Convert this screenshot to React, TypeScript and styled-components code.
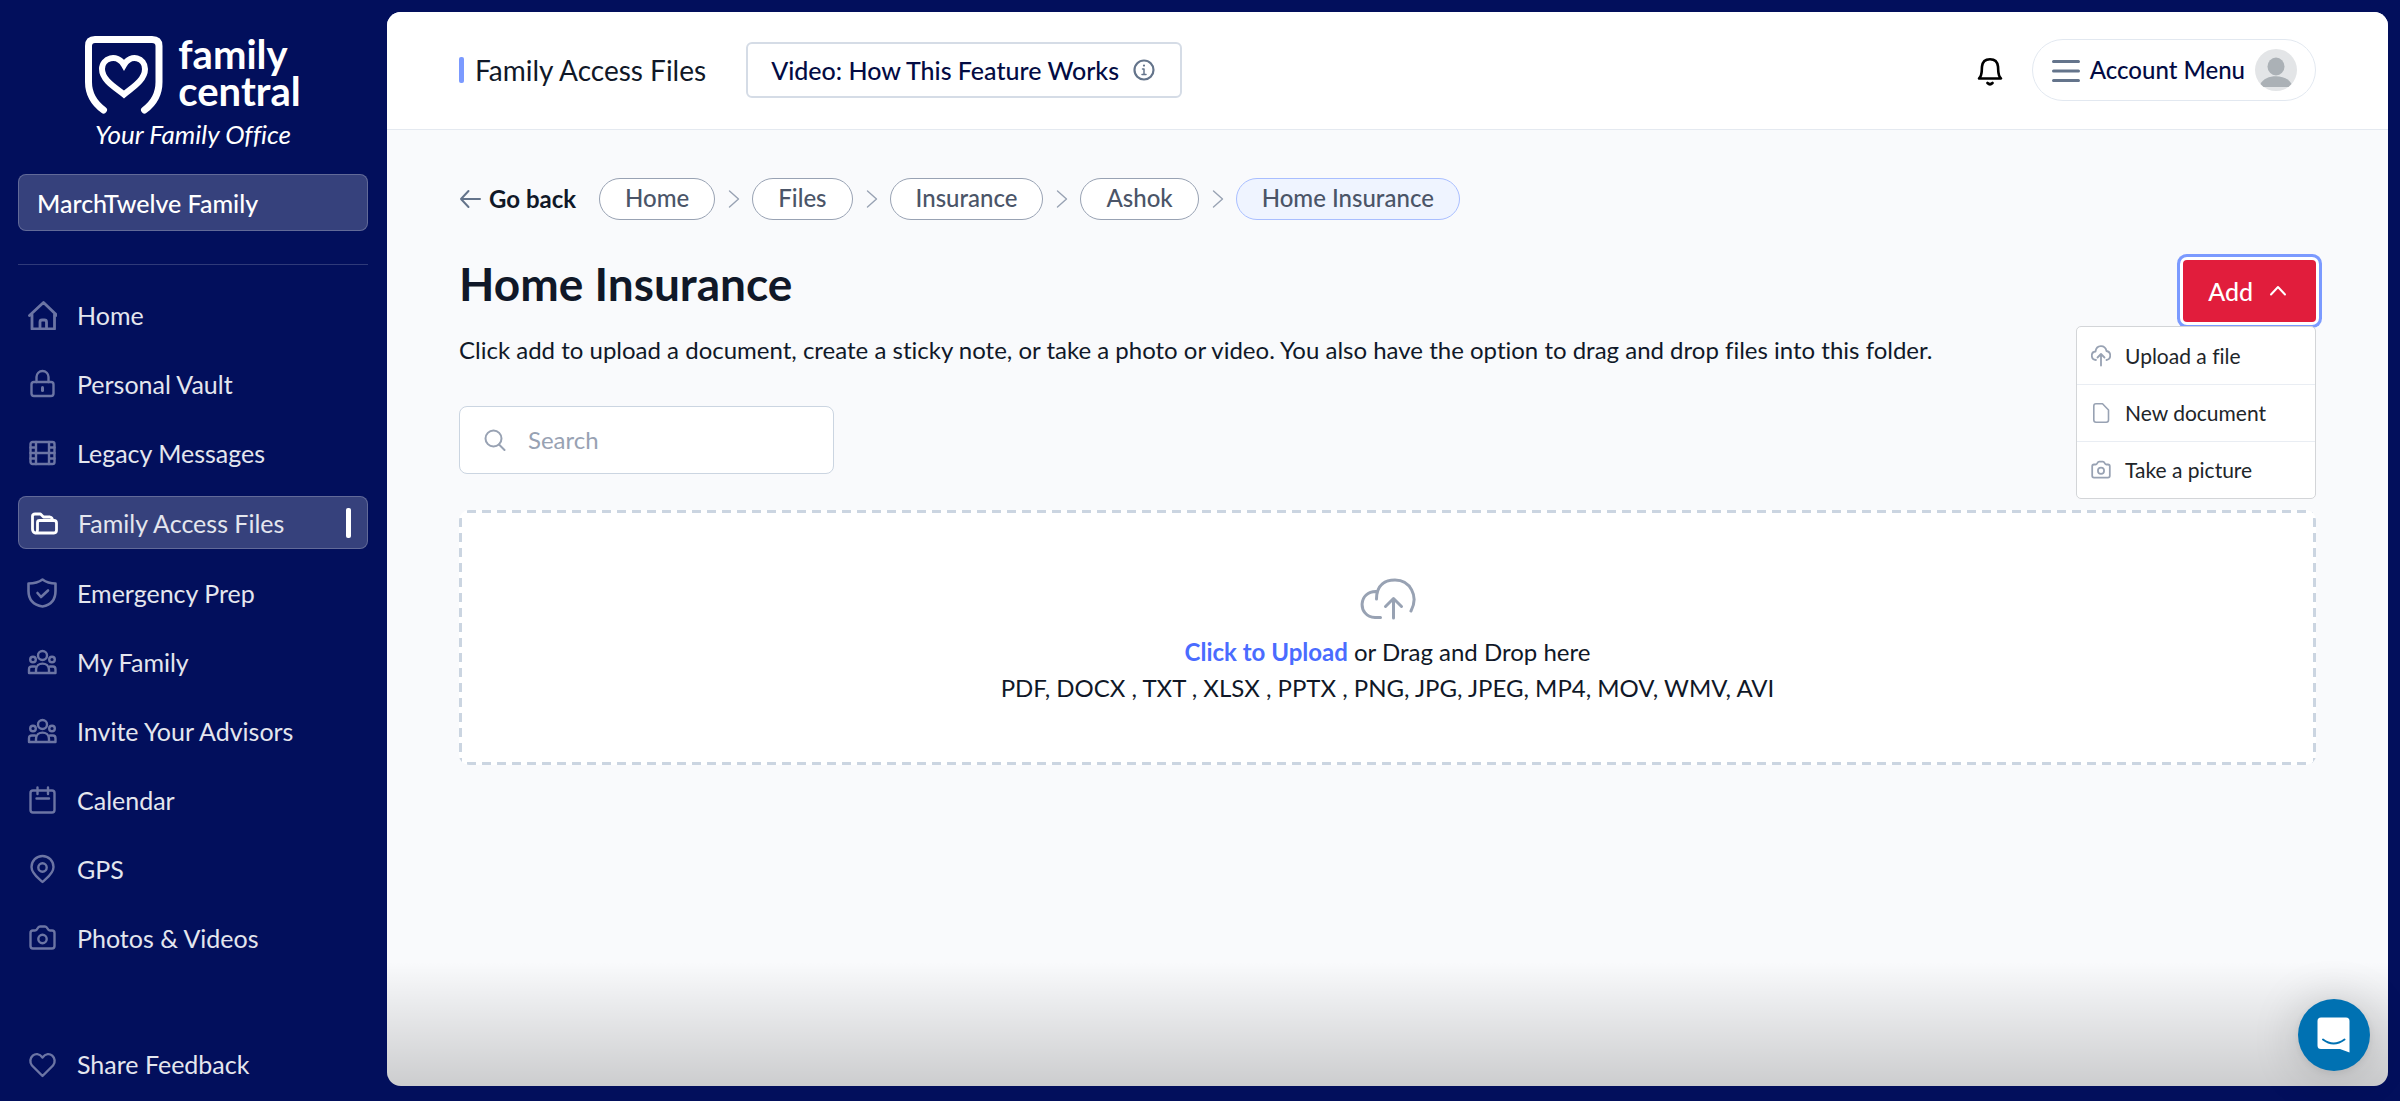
import React from "react";
import styled, { createGlobalStyle, css } from "styled-components";

const navy = "#020f5c";
const ink = "#101828";
const slate = "#4b5568";
const muted = "#98a2b3";
const line = "#cbd5e1";
const canvas = "#f9fafc";

const GlobalStyle = createGlobalStyle`
  *, *::before, *::after { box-sizing: border-box; }
  html, body, #root { height: 100%; }
  body {
    margin: 0;
    background: ${navy};
    color: ${ink};
    font-family: Lato, "Liberation Sans", sans-serif;
    font-size: 24px;
    font-variant-ligatures: none;
    line-height: 36px;
  }
  button, input { font: inherit; font-variant-ligatures: none; color: inherit; }
  button { cursor: pointer; }
  a { color: inherit; text-decoration: none; }
  h1, h2, p, ul, ol { margin: 0; padding: 0; }
  ul, ol { list-style: none; }
  svg { display: block; flex: none; }
`;

/* ---------- shell ---------- */

const Shell = styled.div`
  display: grid;
  grid-template-columns: 387px minmax(0, 1fr);
  min-height: 100vh;
`;

const Sidebar = styled.aside`
  display: flex;
  flex-direction: column;
  padding: 36px 19px 12px 18px;
`;

const Panel = styled.div`
  position: relative;
  display: flex;
  flex-direction: column;
  margin: 12px 12px 15px 0;
  border-radius: 14px;
  background: ${canvas};
  overflow: hidden;
`;

const BottomFade = styled.div`
  position: absolute;
  inset: auto 0 0 0;
  height: 124px;
  background: linear-gradient(to bottom, rgba(0, 0, 0, 0), rgba(0, 0, 0, 0.18));
  pointer-events: none;
`;

/* ---------- sidebar ---------- */

const Brand = styled.a`
  display: flex;
  flex-direction: column;
  align-items: center;
  color: #fff;
`;

const BrandMark = styled.span`
  display: flex;
  gap: 15px;
`;

const BrandName = styled.span`
  font-size: 40px;
  font-weight: 700;
  line-height: 37px;
`;

const Tagline = styled.span`
  margin-top: 4px;
  font-size: 26px;
  font-style: italic;
  line-height: 32px;
`;

const boxed = css`
  border: 1px solid rgba(255, 255, 255, 0.22);
  background: #36417c;
`;

const FamilyButton = styled.button`
  margin-top: 24px;
  padding: 0 18px;
  height: 57px;
  border-radius: 8px;
  ${boxed}
  color: #fff;
  font-size: 25px;
  font-weight: 500;
  text-align: left;
`;

const Divider = styled.hr`
  width: 100%;
  margin: 33px 0 24px;
  border: 0;
  border-top: 1px solid rgba(255, 255, 255, 0.18);
`;

const Nav = styled.nav`
  display: flex;
  flex: 1;
  flex-direction: column;
  justify-content: space-between;
`;

const NavList = styled.ul`
  display: flex;
  flex-direction: column;
  gap: 18px;
`;

const NavLink = styled.a<{ $active?: boolean }>`
  display: flex;
  align-items: center;
  gap: 20px;
  height: ${(p) => (p.$active ? 53 : 51)}px;
  padding: 0 16px 0 9px;
  border-radius: 8px;
  color: #e4e6ee;
  font-size: 25px;
  ${(p) => p.$active && boxed}

  svg { color: ${(p) => (p.$active ? "#fff" : "#6c75a4")}; }
`;

const ActiveBar = styled.span`
  width: 5px;
  height: 30px;
  margin-left: auto;
  border-radius: 2px;
  background: #fff;
`;

/* ---------- header ---------- */

const Header = styled.header`
  display: flex;
  align-items: center;
  justify-content: space-between;
  height: 118px;
  padding: 0 72px 1px;
  border-bottom: 1px solid #e4e9f0;
  background: #fff;
`;

const HeaderGroup = styled.div<{ $gap: number }>`
  display: flex;
  align-items: center;
  gap: ${(p) => p.$gap}px;
`;

const SectionTitle = styled.h2`
  display: flex;
  align-items: center;
  gap: 11px;
  font-size: 28px;
  font-weight: 400;

  &::before {
    content: "";
    width: 5px;
    height: 26px;
    border-radius: 2px;
    background: #7b9aff;
  }
`;

const VideoButton = styled.button`
  display: flex;
  align-items: center;
  gap: 14px;
  height: 56px;
  padding: 0 25px 0 23px;
  border: 2px solid #d5dce6;
  border-radius: 6px;
  background: #fff;
  color: #030b43;
  font-size: 25px;
  font-weight: 500;
  svg { color: #64748b; }
`;

const BellButton = styled.button`
  padding: 0;
  border: 0;
  background: none;
  color: #000;
`;

const AccountButton = styled.button`
  display: flex;
  align-items: center;
  gap: 10px;
  height: 62px;
  padding: 0 18px 0 19px;
  border: 1px solid #e2e8f0;
  border-radius: 31px;
  background: #fff;
  color: #030b43;
  font-weight: 500;
  svg:first-child { color: #64748b; }
`;

/* ---------- content ---------- */

const Content = styled.main`
  flex: 1;
  padding: 48px 72px 124px;
`;

const CrumbRow = styled.nav`
  display: flex;
  align-items: center;
  gap: 23px;
`;

const BackLink = styled.a`
  display: flex;
  align-items: center;
  gap: 7px;
  font-weight: 700;
  svg { color: #64748b; }
`;

const Crumbs = styled.ol`
  display: flex;
  align-items: center;
  gap: 13px;
`;

const CrumbItem = styled.li`
  display: flex;
  align-items: center;
  gap: 12px;
  svg { color: ${muted}; }
`;

const Crumb = styled.a<{ $current?: boolean }>`
  height: 42px;
  padding: 0 25px;
  border: 1px solid ${(p) => (p.$current ? "#a9beff" : muted)};
  border-radius: 21px;
  background: ${(p) => (p.$current ? "#eff4ff" : "#fff")};
  color: ${slate};
  font-weight: 500;
  line-height: 38px;
`;

const TitleRow = styled.div`
  display: flex;
  align-items: flex-start;
  justify-content: space-between;
  gap: 40px;
  margin-top: 40px;
`;

const Title = styled.h1`
  margin-bottom: 24px;
  font-size: 46px;
  font-weight: 700;
  line-height: 48px;
`;

const AddArea = styled.div`
  position: relative;
  flex: none;
`;

const AddButton = styled.button`
  display: flex;
  align-items: center;
  gap: 16px;
  height: 62px;
  padding: 0 29px 0 25px;
  border: 0;
  border-radius: 4px;
  background: #e11d3c;
  box-shadow: 0 0 0 3px #fff, 0 0 0 6px #7b9aff;
  color: #fff;
  font-size: 25px;
  font-weight: 500;
`;

const Menu = styled.ul`
  position: absolute;
  z-index: 1;
  top: 66px;
  right: 0;
  width: 240px;
  border: 1px solid #d3d5d8;
  border-radius: 5px;
  background: #fff;

  li { height: 57px; }
  li + li { border-top: 1px solid #e9edf3; }
`;

const MenuButton = styled.button`
  display: flex;
  align-items: center;
  gap: 14px;
  width: 100%;
  height: 100%;
  padding: 0 14px;
  border: 0;
  background: none;
  color: #212529;
  font-size: 21px;
  svg { color: ${muted}; }
`;

const SearchBox = styled.label`
  display: flex;
  align-items: center;
  gap: 22px;
  width: 375px;
  height: 68px;
  margin-top: 38px;
  padding: 0 24px;
  border: 1px solid ${line};
  border-radius: 8px;
  background: #fff;
  svg { color: ${muted}; }
`;

const SearchInput = styled.input`
  flex: 1;
  min-width: 0;
  padding: 0;
  border: 0;
  outline: 0;
  background: none;
  &::placeholder { color: ${muted}; opacity: 1; }
`;

const dash = (dir: string) =>
  `repeating-linear-gradient(${dir}, ${line} 0 9px, transparent 9px 15px)`;

const DropZone = styled.section`
  display: flex;
  flex-direction: column;
  align-items: center;
  margin-top: 36px;
  padding: 68px 24px 59px;
  border-radius: 10px;
  background:
    ${dash("to right")} 8px 0 / 100% 3px no-repeat,
    ${dash("to right")} 8px 100% / 100% 3px no-repeat,
    ${dash("to bottom")} 0 8px / 3px 100% no-repeat,
    ${dash("to bottom")} 100% 8px / 3px 100% no-repeat,
    #fff;
  text-align: center;
  svg { margin-bottom: 14px; color: ${muted}; }
`;

const UploadButton = styled.button`
  padding: 0;
  border: 0;
  background: none;
  color: #4a6cff;
  font-weight: 700;
`;

const ChatButton = styled.button`
  position: fixed;
  right: 30px;
  bottom: 30px;
  display: grid;
  place-items: center;
  width: 72px;
  height: 72px;
  padding: 0;
  border: 0;
  border-radius: 50%;
  background: #0071b2;
  box-shadow: 0 2px 9px rgba(0, 0, 0, 0.08), 0 3px 48px rgba(0, 0, 0, 0.18);
`;

/* ---------- icons ---------- */

type IconProps = { w?: number; h?: number; sw?: number; box?: string; children: React.ReactNode };

const Icon = ({ w = 30, h = 30, sw = 2.4, box, children }: IconProps) => (
  <svg
    width={w}
    height={h}
    viewBox={box ?? `0 0 ${w} ${h}`}
    fill="none"
    stroke="currentColor"
    strokeWidth={sw}
    strokeLinecap="round"
    strokeLinejoin="round"
    aria-hidden="true"
  >
    {children}
  </svg>
);

const ShieldLogo = () => (
  <Icon w={78} h={78} sw={7}>
    <path d="M18.500 74 C9 67 3.500 58 3.500 46 V10 Q3.500 3.500 10 3.500 H67 Q74 3.500 74 10 V46 C74 58 69 67 59.500 74" />
    <path
      d="M39 58.500 C33 53 17 45 17 33 C17 22 32 17 39 29 C46 17 60 22 60 33 C60 45 45 53 39 58.500 Z"
      strokeWidth={6}
      strokeLinejoin="miter"
    />
  </Icon>
);

const HomeIcon = () => (
  <Icon sw={2.8} box="-1 0 30 30">
    <path d="M1.500 15.500 L15.500 2.500 L29 15.500 M4 14.500 V29 H26.500 V14.500 M12 28.500 V22 Q12 20 14 20 H16.500 Q18.500 20 18.500 22 V28.500" />
  </Icon>
);
const LockIcon = () => (
  <Icon>
    <rect x="4.500" y="13" width="22" height="14" rx="2.500" />
    <path d="M9.500 13 V8 A6 6 0 0 1 21.500 8 V13" />
    <path d="M15.500 18.500 V21.500" strokeWidth={3} />
  </Icon>
);
const FilmIcon = () => (
  <Icon>
    <rect x="3.500" y="4" width="24" height="22" rx="2" />
    <path d="M9 4 V26 M22 4 V26 M9 15 H22 M3.500 9.500 H9 M3.500 15 H9 M3.500 20.500 H9 M22 9.500 H27.500 M22 15 H27.500 M22 20.500 H27.500" />
  </Icon>
);
const FolderIcon = () => (
  <Icon sw={2.8}>
    <path d="M7 25 Q4.500 24 4.500 21 V8 Q4.500 6 7 6 H12.500 L15.500 9 H22 Q24.500 9.500 24.500 12.500" />
    <path d="M9.500 14.500 Q9.500 12.500 11.500 12.500 H26 Q28.500 12.500 28.500 15 V22 Q28.500 25 26 25 H8 Q9.500 24 9.500 22 Z" />
  </Icon>
);
const ShieldIcon = () => (
  <Icon sw={2.6}>
    <path d="M15.500 1.500 C11.500 4.500 7 5.500 1.500 5.500 V13 C1.500 22 7 27 15.500 28.500 C24 27 28.500 22 28.500 13 V5.500 C24 5.500 19.500 4.500 15.500 1.500 Z" />
    <path d="M10.500 15 L14 19 L21 12.500" />
  </Icon>
);
const PeopleIcon = () => (
  <Icon>
    <circle cx="15.500" cy="8.500" r="4.500" />
    <circle cx="6" cy="12.500" r="2.800" />
    <circle cx="25" cy="12.500" r="2.800" />
    <path d="M9 26 V23 C9 14.500 22 14.500 22 23 V26 M2 26 H28.500 V22.500 Q28.500 19.500 26 19.500 H23 M8 19.500 H5 Q2 19.500 2 22.500 V26" />
  </Icon>
);
const CalendarIcon = () => (
  <Icon>
    <rect x="3.500" y="5.500" width="24" height="22" rx="2.500" />
    <path d="M10.500 2.500 V9 M21 2.500 V9 M9.500 13.500 H22" />
  </Icon>
);
const PinIcon = () => (
  <Icon>
    <path d="M15.500 28 C12 24.500 4.500 20 4.500 13 A11 11 0 0 1 26.500 13 C26.500 20 19 24.500 15.500 28 Z" />
    <circle cx="15.500" cy="13.500" r="4.200" />
  </Icon>
);
const cameraShapes = (
  <>
    <path d="M6 7.500 H8 Q9.500 7.500 10.500 5.500 Q11.500 3.500 13 3.500 H18 Q19.500 3.500 20.500 5.500 Q21.500 7.500 23 7.500 H25 Q27.500 7.500 27.500 10 V23 Q27.500 25.500 25 25.500 H6 Q3.500 25.500 3.500 23 V10 Q3.500 7.500 6 7.500 Z" />
    <circle cx="15.500" cy="16" r="4.200" />
  </>
);
const CameraIcon = () => <Icon>{cameraShapes}</Icon>;
const HeartIcon = () => (
  <Icon>
    <path d="M15.500 27 L5 16.500 C-0.500 9.500 9 0 15.500 8.500 C22 0 31.500 9.500 26 16.500 Z" />
  </Icon>
);

const InfoIcon = () => (
  <Icon w={22} h={22} sw={2.2}>
    <circle cx="11" cy="11" r="9.500" />
    <path d="M9.500 10 H11 V15.500 M9 15.500 H13" strokeWidth={1.5} />
    <path d="M11 6.500 V6.600" />
  </Icon>
);
const BellIcon = () => (
  <Icon w={26} h={34} sw={2.6} box="0 -4 26 34">
    <path d="M2 21.500 C5.500 18.500 4.500 14 5 9.500 C5.500 4.500 8.500 2.200 13 2.200 C17.500 2.200 20.500 4.500 21 9.500 C21.500 14 20.500 18.500 24 21.500 Z" />
    <path d="M10.500 26 Q13 28.500 15.500 26" />
  </Icon>
);
const BurgerIcon = () => (
  <Icon w={28} h={24} sw={3}>
    <path d="M1.500 3.500 H26.500 M1.500 13 H26.500 M1.500 22.500 H26.500" />
  </Icon>
);
const Avatar = () => (
  <svg width="42" height="42" viewBox="0 0 42 42" aria-hidden="true">
    <circle cx="21" cy="21" r="21" fill="#e3e5e7" />
    <ellipse cx="21" cy="17.500" rx="8.500" ry="9" fill="#abb1b6" />
    <path d="M5.500 35 C10 24.500 32 24.500 36.500 35 L33.500 38 H8.500 Z" fill="#abb1b6" />
  </svg>
);
const ArrowLeftIcon = () => (
  <Icon w={23} h={22} sw={2}>
    <path d="M21 11 H2 M9.500 3 L2 11 L9.500 19" />
  </Icon>
);
const ChevronIcon = () => (
  <Icon w={12} h={20} sw={1.4}>
    <path d="M1.500 2 L10.500 10 L1.500 18" />
  </Icon>
);
const ChevronUpIcon = () => (
  <Icon w={18} h={12} sw={2}>
    <path d="M2 9.500 L9 2 L16 9.500" />
  </Icon>
);
const UploadIcon = () => (
  <Icon w={20} h={22} sw={1.8}>
    <path d="M5 15 C-0.500 14.500 -0.500 7 4.500 6.500 C5.500 -0.500 14 -0.500 15.500 6 C20.500 7 20.500 14 15.500 15" />
    <path d="M10 20.500 V9.500 M6.500 12.500 L10 9 L13.500 12.500" />
  </Icon>
);
const FileIcon = () => (
  <Icon w={20} h={22} sw={1.6}>
    <path d="M5 1.800 H11.500 L17.500 8 V18 Q17.500 20.200 15.300 20.200 H5 Q2.800 20.200 2.800 18 V4 Q2.800 1.800 5 1.800 Z" />
  </Icon>
);
const SmallCameraIcon = () => (
  <Icon w={20} h={22} box="2 0 27 30">{cameraShapes}</Icon>
);
const SearchIcon = () => (
  <Icon w={22} h={22} sw={2}>
    <circle cx="9.500" cy="9.500" r="8" />
    <path d="M15 15.500 L20.500 21" />
  </Icon>
);
const CloudIcon = () => (
  <Icon w={56} h={42} sw={3}>
    <path d="M20.500 39.500 H15 C-3 38.500 -2 12.500 17 13.500 M16.500 21 C16.500 6 26 2 35 2 C50 2 59 18 51 33" />
    <path d="M33.500 40 V21 M25.500 28.500 L33.500 20.500 L41.500 28.500" />
  </Icon>
);
const ChatIcon = () => (
  <svg width="34" height="36" viewBox="0 0 34 36" aria-hidden="true">
    <path d="M4 0.500 H29 Q32.500 0.500 32.500 4 V35.500 L23 32 H4 Q0.500 32 0.500 28.500 V4 Q0.500 0.500 4 0.500 Z" fill="#fff" />
    <path d="M6 22.500 Q16.500 30.500 27.500 22.500" fill="none" stroke="#0071b2" strokeWidth="2" strokeLinecap="round" />
  </svg>
);

/* ---------- page ---------- */

const navItems = [
  { label: "Home", icon: <HomeIcon /> },
  { label: "Personal Vault", icon: <LockIcon /> },
  { label: "Legacy Messages", icon: <FilmIcon /> },
  { label: "Family Access Files", icon: <FolderIcon />, active: true },
  { label: "Emergency Prep", icon: <ShieldIcon /> },
  { label: "My Family", icon: <PeopleIcon /> },
  { label: "Invite Your Advisors", icon: <PeopleIcon /> },
  { label: "Calendar", icon: <CalendarIcon /> },
  { label: "GPS", icon: <PinIcon /> },
  { label: "Photos & Videos", icon: <CameraIcon /> },
];

const crumbs = ["Home", "Files", "Insurance", "Ashok", "Home Insurance"];

const addActions = [
  { label: "Upload a file", icon: <UploadIcon /> },
  { label: "New document", icon: <FileIcon /> },
  { label: "Take a picture", icon: <SmallCameraIcon /> },
];

export default function App() {
  return (
    <>
      <GlobalStyle />
      <Shell>
        <Sidebar>
          <Brand href="#">
            <BrandMark>
              <ShieldLogo />
              <BrandName>
                family
                <br />
                central
              </BrandName>
            </BrandMark>
            <Tagline>Your Family Office</Tagline>
          </Brand>
          <FamilyButton type="button">MarchTwelve Family</FamilyButton>
          <Divider />
          <Nav aria-label="Main">
            <NavList>
              {navItems.map((item) => (
                <li key={item.label}>
                  <NavLink href="#" $active={item.active} aria-current={item.active ? "page" : undefined}>
                    {item.icon}
                    {item.label}
                    {item.active && <ActiveBar />}
                  </NavLink>
                </li>
              ))}
            </NavList>
            <NavLink href="#">
              <HeartIcon />
              Share Feedback
            </NavLink>
          </Nav>
        </Sidebar>

        <Panel>
          <Header>
            <HeaderGroup $gap={40}>
              <SectionTitle>Family Access Files</SectionTitle>
              <VideoButton type="button">
                Video: How This Feature Works
                <InfoIcon />
              </VideoButton>
            </HeaderGroup>
            <HeaderGroup $gap={29}>
              <BellButton type="button" aria-label="Notifications">
                <BellIcon />
              </BellButton>
              <AccountButton type="button">
                <BurgerIcon />
                Account Menu
                <Avatar />
              </AccountButton>
            </HeaderGroup>
          </Header>

          <Content>
            <CrumbRow aria-label="Breadcrumb">
              <BackLink href="#">
                <ArrowLeftIcon />
                Go back
              </BackLink>
              <Crumbs>
                {crumbs.map((name, i) => (
                  <CrumbItem key={name}>
                    {i > 0 && <ChevronIcon />}
                    <Crumb href="#" $current={i === crumbs.length - 1}>
                      {name}
                    </Crumb>
                  </CrumbItem>
                ))}
              </Crumbs>
            </CrumbRow>

            <TitleRow>
              <div>
                <Title>Home Insurance</Title>
                <p>
                  Click add to upload a document, create a sticky note, or take a photo or video. You also have the
                  option to drag and drop files into this folder.
                </p>
              </div>
              <AddArea>
                <AddButton type="button" aria-expanded="true">
                  Add
                  <ChevronUpIcon />
                </AddButton>
                <Menu>
                  {addActions.map((action) => (
                    <li key={action.label}>
                      <MenuButton type="button">
                        {action.icon}
                        {action.label}
                      </MenuButton>
                    </li>
                  ))}
                </Menu>
              </AddArea>
            </TitleRow>

            <SearchBox>
              <SearchIcon />
              <SearchInput type="search" placeholder="Search" aria-label="Search" />
            </SearchBox>

            <DropZone>
              <CloudIcon />
              <p>
                <UploadButton type="button">Click to Upload</UploadButton> or Drag and Drop here
              </p>
              <p>PDF, DOCX , TXT , XLSX , PPTX , PNG, JPG, JPEG, MP4, MOV, WMV, AVI</p>
            </DropZone>
          </Content>
          <BottomFade />
        </Panel>
      </Shell>
      <ChatButton type="button" aria-label="Open chat">
        <ChatIcon />
      </ChatButton>
    </>
  );
}
